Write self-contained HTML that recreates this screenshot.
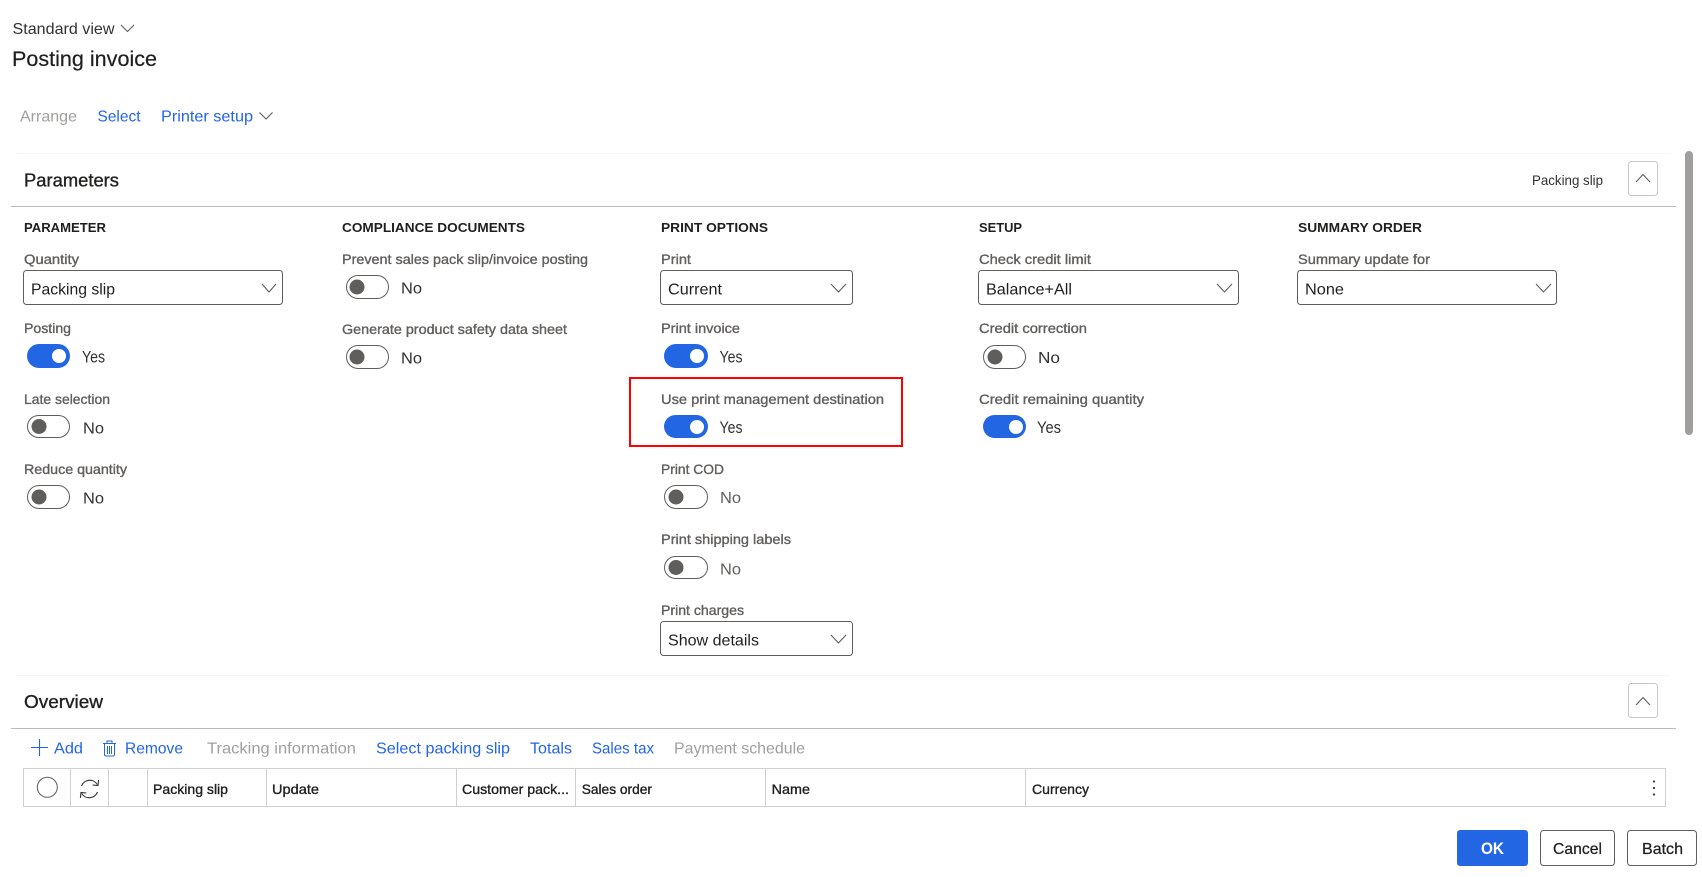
<!DOCTYPE html>
<html lang="en">
<head>
<meta charset="utf-8">
<title>Posting invoice</title>
<style>
html,body{margin:0;padding:0;background:#fff;width:1702px;height:877px;overflow:hidden}
svg{display:block}
text{font-family:"Liberation Sans",Arial,sans-serif;white-space:pre}
.sv{font-size:16px;fill:#323130}
.h1{font-size:21px;fill:#201f1e;stroke:#201f1e;stroke-width:.2}
.a{font-size:16px;fill:#2266e3}
.d{font-size:16px;fill:#a19f9d}
.h2{font-size:18px;fill:#201f1e;stroke:#201f1e;stroke-width:.35}
.g{font-size:13px;font-weight:bold;fill:#201f1e}
.l{font-size:14px;fill:#605e5c;stroke:#605e5c;stroke-width:.35}
.v{font-size:16px;fill:#201f1e}
.n{font-size:16px;fill:#323130}
.y{font-size:17px;fill:#323130}
.m{font-size:16px;fill:#605e5c}
.s{font-size:14px;fill:#323130}
.c{font-size:14px;fill:#201f1e;stroke:#201f1e;stroke-width:.35}
.b{font-size:16px;fill:#201f1e;stroke:#201f1e;stroke-width:.25}
.ok{font-size:17px;font-weight:bold;fill:#fff}
.chev{fill:none;stroke:#605e5c;stroke-width:1.1}
.sel{fill:#fff;stroke:#605e5c;stroke-width:1}
.ton{fill:#2266e3}
.tk{fill:#fff}
.tof{fill:#fff;stroke:#605e5c;stroke-width:1}
.kf{fill:#605e5c}
.gl{stroke:#d2d0ce;stroke-width:1;fill:none}
</style>
</head>
<body>
<svg width="1702" height="877" viewBox="0 0 1702 877" xmlns="http://www.w3.org/2000/svg">
<rect width="1702" height="877" fill="#fff"/>

<text class="sv" x="12.5" y="34" textLength="102" lengthAdjust="spacingAndGlyphs">Standard view</text>
<polyline class="chev" points="121,25 127.5,31.5 134,25"/>
<text class="h1" x="12" y="66" textLength="145" lengthAdjust="spacingAndGlyphs">Posting invoice</text>

<text class="d" x="20" y="121.5" textLength="57" lengthAdjust="spacingAndGlyphs">Arrange</text>
<text class="a" x="97.5" y="121.5" textLength="43" lengthAdjust="spacingAndGlyphs">Select</text>
<text class="a" x="161" y="121.5" textLength="92" lengthAdjust="spacingAndGlyphs">Printer setup</text>
<polyline class="chev" points="259.5,112.5 266,119 272.5,112.5"/>

<rect x="17" y="153" width="1653" height="1" fill="#f6f5f4"/>
<text class="h2" x="24" y="186.5" textLength="95" lengthAdjust="spacingAndGlyphs">Parameters</text>
<text class="s" x="1532" y="185" textLength="71" lengthAdjust="spacingAndGlyphs">Packing slip</text>
<rect x="1628.5" y="161.5" width="29" height="34" rx="3" fill="#fff" stroke="#c8c6c4"/>
<polyline class="chev" points="1636,182 1643,174.5 1650,182"/>
<rect x="11" y="206" width="1665" height="1" fill="#bdbbb9"/>

<text class="g" x="24" y="232" textLength="82" lengthAdjust="spacingAndGlyphs">PARAMETER</text>
<text class="g" x="342" y="232" textLength="183" lengthAdjust="spacingAndGlyphs">COMPLIANCE DOCUMENTS</text>
<text class="g" x="661" y="232" textLength="107" lengthAdjust="spacingAndGlyphs">PRINT OPTIONS</text>
<text class="g" x="979" y="232" textLength="43" lengthAdjust="spacingAndGlyphs">SETUP</text>
<text class="g" x="1298" y="232" textLength="124" lengthAdjust="spacingAndGlyphs">SUMMARY ORDER</text>

<!-- Column 1 -->
<text class="l" x="24" y="264" textLength="55" lengthAdjust="spacingAndGlyphs">Quantity</text>
<rect class="sel" x="23.5" y="270.5" width="259" height="34" rx="3"/>
<text class="v" x="31" y="294.5" textLength="84" lengthAdjust="spacingAndGlyphs">Packing slip</text>
<polyline class="chev" points="262,284 269,292 276,284"/>

<text class="l" x="24" y="333" textLength="47" lengthAdjust="spacingAndGlyphs">Posting</text>
<rect class="ton" x="27" y="344" width="43" height="24" rx="12"/><circle class="tk" cx="59" cy="356" r="7"/>
<text class="y" x="82" y="362.5" textLength="23" lengthAdjust="spacingAndGlyphs">Yes</text>

<text class="l" x="24" y="404" textLength="86" lengthAdjust="spacingAndGlyphs">Late selection</text>
<rect class="tof" x="27.5" y="415.5" width="42" height="22" rx="11"/><circle class="kf" cx="39" cy="426.5" r="7.5"/>
<text class="n" x="83" y="433.5" textLength="21" lengthAdjust="spacingAndGlyphs">No</text>

<text class="l" x="24" y="474" textLength="103" lengthAdjust="spacingAndGlyphs">Reduce quantity</text>
<rect class="tof" x="27.5" y="485.5" width="42" height="23" rx="11.5"/><circle class="kf" cx="39" cy="497" r="7.5"/>
<text class="n" x="83" y="503.5" textLength="21" lengthAdjust="spacingAndGlyphs">No</text>

<!-- Column 2 -->
<text class="l" x="342" y="264" textLength="246" lengthAdjust="spacingAndGlyphs">Prevent sales pack slip/invoice posting</text>
<rect class="tof" x="346.5" y="275.5" width="42" height="23" rx="11.5"/><circle class="kf" cx="357" cy="287" r="7.5"/>
<text class="n" x="401" y="293.5" textLength="21" lengthAdjust="spacingAndGlyphs">No</text>

<text class="l" x="342" y="334" textLength="225" lengthAdjust="spacingAndGlyphs">Generate product safety data sheet</text>
<rect class="tof" x="346.5" y="345.5" width="42" height="23" rx="11.5"/><circle class="kf" cx="357" cy="357" r="7.5"/>
<text class="n" x="401" y="363.5" textLength="21" lengthAdjust="spacingAndGlyphs">No</text>

<!-- Column 3 -->
<text class="l" x="661" y="264" textLength="30" lengthAdjust="spacingAndGlyphs">Print</text>
<rect class="sel" x="660.5" y="270.5" width="192" height="34" rx="3"/>
<text class="v" x="668" y="294.5" textLength="54" lengthAdjust="spacingAndGlyphs">Current</text>
<polyline class="chev" points="831,284 838.5,292 846,284"/>

<text class="l" x="661" y="333" textLength="79" lengthAdjust="spacingAndGlyphs">Print invoice</text>
<rect class="ton" x="664" y="344" width="44" height="24" rx="12"/><circle class="tk" cx="697" cy="356" r="7"/>
<text class="y" x="719.5" y="362.5" textLength="23" lengthAdjust="spacingAndGlyphs">Yes</text>

<rect x="630" y="378" width="272" height="68" fill="none" stroke="#fe0000" stroke-width="2"/>
<text class="l" x="661" y="404" textLength="223" lengthAdjust="spacingAndGlyphs">Use print management destination</text>
<rect class="ton" x="664" y="415" width="44" height="23" rx="11.5"/><circle class="tk" cx="697" cy="427" r="7"/>
<text class="y" x="719.5" y="433" textLength="23" lengthAdjust="spacingAndGlyphs">Yes</text>

<text class="l" x="661" y="474" textLength="63" lengthAdjust="spacingAndGlyphs">Print COD</text>
<rect class="tof" x="664.5" y="485.5" width="43" height="23" rx="11.5"/><circle class="kf" cx="676" cy="497" r="7.5"/>
<text class="m" x="720" y="503" textLength="21" lengthAdjust="spacingAndGlyphs">No</text>

<text class="l" x="661" y="544" textLength="130" lengthAdjust="spacingAndGlyphs">Print shipping labels</text>
<rect class="tof" x="664.5" y="556.5" width="43" height="22" rx="11"/><circle class="kf" cx="676" cy="567.5" r="7.5"/>
<text class="m" x="720" y="574.5" textLength="21" lengthAdjust="spacingAndGlyphs">No</text>

<text class="l" x="661" y="615" textLength="83" lengthAdjust="spacingAndGlyphs">Print charges</text>
<rect class="sel" x="660.5" y="621.5" width="192" height="34" rx="3"/>
<text class="v" x="668" y="645.5" textLength="91" lengthAdjust="spacingAndGlyphs">Show details</text>
<polyline class="chev" points="831,635 838.5,643 846,635"/>

<!-- Column 4 -->
<text class="l" x="979" y="264" textLength="112" lengthAdjust="spacingAndGlyphs">Check credit limit</text>
<rect class="sel" x="978.5" y="270.5" width="260" height="34" rx="3"/>
<text class="v" x="986" y="294.5" textLength="86" lengthAdjust="spacingAndGlyphs">Balance+All</text>
<polyline class="chev" points="1217,284 1224.5,292 1232,284"/>

<text class="l" x="979" y="333" textLength="108" lengthAdjust="spacingAndGlyphs">Credit correction</text>
<rect class="tof" x="983.5" y="345.5" width="42" height="23" rx="11.5"/><circle class="kf" cx="995" cy="357" r="7.5"/>
<text class="n" x="1038" y="363" textLength="22" lengthAdjust="spacingAndGlyphs">No</text>

<text class="l" x="979" y="404" textLength="165" lengthAdjust="spacingAndGlyphs">Credit remaining quantity</text>
<rect class="ton" x="983" y="415" width="43" height="23" rx="11.5"/><circle class="tk" cx="1016" cy="427" r="7"/>
<text class="y" x="1037" y="433" textLength="24" lengthAdjust="spacingAndGlyphs">Yes</text>

<!-- Column 5 -->
<text class="l" x="1298" y="264" textLength="132" lengthAdjust="spacingAndGlyphs">Summary update for</text>
<rect class="sel" x="1297.5" y="270.5" width="259" height="34" rx="3"/>
<text class="v" x="1305" y="294.5" textLength="39" lengthAdjust="spacingAndGlyphs">None</text>
<polyline class="chev" points="1536,284 1543.5,292 1551,284"/>

<!-- Scrollbar -->
<rect x="1685" y="151" width="8" height="284" rx="4" fill="#a19f9d"/>

<!-- Overview -->
<rect x="17" y="675" width="1653" height="1" fill="#f6f5f4"/>
<text class="h2" x="24" y="708" textLength="79" lengthAdjust="spacingAndGlyphs">Overview</text>
<rect x="1628.5" y="683.5" width="29" height="34" rx="3" fill="#fff" stroke="#c8c6c4"/>
<polyline class="chev" points="1636,705 1643,697.5 1650,705"/>
<rect x="11" y="728" width="1665" height="1" fill="#bdbbb9"/>

<path d="M39.5 739V756M31 747.5H48" fill="none" stroke="#2266e3" stroke-width="1.1"/>
<text class="a" x="54" y="753.5" textLength="29" lengthAdjust="spacingAndGlyphs">Add</text>
<path d="M103 743.5H116M107 743.5V741H112V743.5M104.5 743.5V754.5Q104.5 756 106 756H113Q114.5 756 114.5 754.5V743.5M107.5 746V754M109.5 746V754M111.5 746V754" fill="none" stroke="#2266e3" stroke-width="1"/>
<text class="a" x="125" y="753.5" textLength="58" lengthAdjust="spacingAndGlyphs">Remove</text>
<text class="d" x="207" y="753.5" textLength="149" lengthAdjust="spacingAndGlyphs">Tracking information</text>
<text class="a" x="376" y="753.5" textLength="134" lengthAdjust="spacingAndGlyphs">Select packing slip</text>
<text class="a" x="530" y="753.5" textLength="42" lengthAdjust="spacingAndGlyphs">Totals</text>
<text class="a" x="592" y="753.5" textLength="62" lengthAdjust="spacingAndGlyphs">Sales tax</text>
<text class="d" x="674" y="753.5" textLength="131" lengthAdjust="spacingAndGlyphs">Payment schedule</text>

<!-- Grid header -->
<rect class="gl" x="23.5" y="768.5" width="1642" height="38"/>
<path class="gl" d="M70.5 769V806M108.5 769V806M147.5 769V806M266.5 769V806M456.5 769V806M575.5 769V806M765.5 769V806M1025.5 769V806"/>
<circle cx="47.3" cy="787.3" r="10" fill="#fff" stroke="#605e5c" stroke-width="1"/>
<path d="M81.5 786A8.8 8.8 0 0 1 97.3 784.5M98.6 780L98 785.5L92.6 785M97.5 792A8.8 8.8 0 0 1 81.7 793.5M80.4 798L81 792.5L86.4 793" fill="none" stroke="#323130" stroke-width="1.1"/>
<text class="c" x="153" y="794" textLength="75" lengthAdjust="spacingAndGlyphs">Packing slip</text>
<text class="c" x="272" y="794" textLength="47" lengthAdjust="spacingAndGlyphs">Update</text>
<text class="c" x="462" y="794" textLength="107" lengthAdjust="spacingAndGlyphs">Customer pack...</text>
<text class="c" x="581.7" y="794" textLength="70.3" lengthAdjust="spacingAndGlyphs">Sales order</text>
<text class="c" x="771.7" y="794" textLength="38.3" lengthAdjust="spacingAndGlyphs">Name</text>
<text class="c" x="1032" y="794" textLength="57" lengthAdjust="spacingAndGlyphs">Currency</text>
<circle cx="1654" cy="781.5" r="1.1" fill="#323130"/>
<circle cx="1654" cy="788" r="1.1" fill="#323130"/>
<circle cx="1654" cy="794.5" r="1.1" fill="#323130"/>

<!-- Footer buttons -->
<rect x="1457" y="830" width="71" height="36" rx="3" fill="#2266e3"/>
<text class="ok" x="1481" y="854" textLength="23" lengthAdjust="spacingAndGlyphs">OK</text>
<rect x="1540.5" y="830.5" width="74" height="35" rx="3" fill="#fff" stroke="#605e5c"/>
<text class="b" x="1553" y="854" textLength="49" lengthAdjust="spacingAndGlyphs">Cancel</text>
<rect x="1627.5" y="830.5" width="69" height="35" rx="3" fill="#fff" stroke="#605e5c"/>
<text class="b" x="1642" y="854" textLength="41" lengthAdjust="spacingAndGlyphs">Batch</text>
</svg>
</body>
</html>
